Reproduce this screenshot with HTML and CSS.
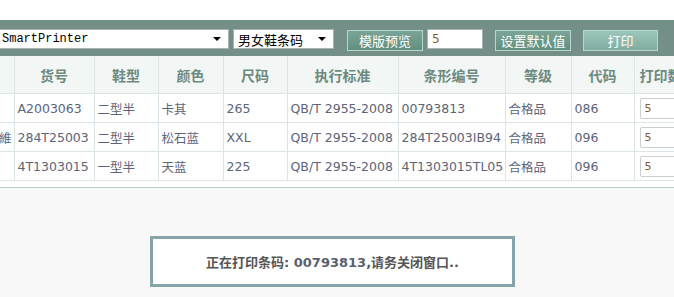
FILE: index.html
```html
<!DOCTYPE html>
<html lang="zh-CN">
<head>
    <meta charset="UTF-8">
    <title>打印条码</title>
    <link rel="stylesheet" href="styles.css">
</head>
<body>
    <div class="top"></div>
    <div class="toolbar">
        <div class="sel sel-printer"><select><option>SmartPrinter</option></select></div>
        <div class="sel sel-tpl"><select><option>男女鞋条码</option></select></div>
        <button class="btn btn-preview">模版预览</button>
        <input class="num" type="text" value="5">
        <button class="btn btn-default">设置默认值</button>
        <button class="btn btn-print">打印</button>
    </div>
    <div class="grid-wrap">
        <table class="grid">
            <colgroup>
                <col style="width:60px">
                <col style="width:80px">
                <col style="width:64px">
                <col style="width:65px">
                <col style="width:64px">
                <col style="width:111px">
                <col style="width:107px">
                <col style="width:66px">
                <col style="width:63px">
                <col style="width:80px">
            </colgroup>
            <thead>
                <tr>
                    <th>名称</th>
                    <th>货号</th>
                    <th>鞋型</th>
                    <th>颜色</th>
                    <th>尺码</th>
                    <th>执行标准</th>
                    <th>条形编号</th>
                    <th>等级</th>
                    <th>代码</th>
                    <th class="left">打印数量</th>
                </tr>
            </thead>
            <tbody>
                <tr>
                    <td></td>
                    <td>A2003063</td>
                    <td>二型半</td>
                    <td>卡其</td>
                    <td>265</td>
                    <td>QB/T 2955-2008</td>
                    <td>00793813</td>
                    <td>合格品</td>
                    <td>086</td>
                    <td><input class="qty" type="text" value="5"></td>
                </tr>
                <tr>
                    <td class="clip">合成纖維</td>
                    <td>284T25003</td>
                    <td>二型半</td>
                    <td>松石蓝</td>
                    <td>XXL</td>
                    <td>QB/T 2955-2008</td>
                    <td>284T25003IB94</td>
                    <td>合格品</td>
                    <td>096</td>
                    <td><input class="qty" type="text" value="5"></td>
                </tr>
                <tr>
                    <td></td>
                    <td>4T1303015</td>
                    <td>一型半</td>
                    <td>天蓝</td>
                    <td>225</td>
                    <td>QB/T 2955-2008</td>
                    <td>4T1303015TL05</td>
                    <td>合格品</td>
                    <td>096</td>
                    <td><input class="qty" type="text" value="5"></td>
                </tr>
            </tbody>
        </table>
    </div>
    <div class="status-area">
        <div class="status"><span>正在打印条码: <span class="code">00793813</span>,请务关闭窗口..</span></div>
    </div>
</body>
</html>
```

FILE: styles.css
```css
html, body {
    margin: 0;
    padding: 0;
    height: 100%;
    overflow: hidden;
}
body {
    font-family: "DejaVu Sans", "Noto Sans CJK SC", sans-serif;
    background: #f8f8f8;
    font-size: 13px;
}
.top {
    height: 20px;
    background: #fff;
}
.toolbar {
    height: 36px;
    box-sizing: border-box;
    padding-top: 9px;
    background: #738f88;
    display: flex;
    align-items: flex-start;
    margin-left: -2px;
}
.sel {
    position: relative;
    height: 20px;
    background: #fff;
    border: 1px solid #a9b3b0;
    box-sizing: border-box;
}
.sel select {
    appearance: none;
    -webkit-appearance: none;
    border: none;
    background: transparent;
    height: 18px;
    width: 100%;
    padding: 0 0 0 3px;
    color: #000;
    outline: none;
}
.sel::after {
    content: "";
    position: absolute;
    right: 7px;
    top: 7px;
    border-left: 4px solid transparent;
    border-right: 4px solid transparent;
    border-top: 4px solid #000;
}
.sel-printer {
    width: 231px;
}
.sel-printer select {
    font-family: "Liberation Mono", "Noto Sans CJK SC", monospace;
    font-size: 12px;
}
.sel-tpl {
    width: 101px;
    margin-left: 4px;
}
.sel-tpl select {
    font-family: "Noto Sans CJK SC", sans-serif;
    font-size: 13px;
    padding-left: 4px;
}
.btn {
    height: 21px;
    width: 76px;
    margin-top: 1px;
    padding: 0;
    border: 1px solid #b4d8cd;
    background: linear-gradient(#7aa497, #62907f);
    color: #fff;
    font-family: "Noto Sans CJK SC", sans-serif;
    font-size: 13px;
    line-height: 19px;
}
.btn-preview {
    margin-left: 13px;
}
.btn-default {
    margin-left: 12px;
}
.btn-print {
    margin-left: 12px;
    width: 75px;
    background: linear-gradient(#9cc6ba, #80ad9f);
}
.num {
    width: 56px;
    height: 20px;
    margin-left: 4px;
    box-sizing: border-box;
    border: 1px solid #a9b3b0;
    padding: 0 4px;
    font-family: "DejaVu Sans", sans-serif;
    font-size: 12px;
    color: #8a5a2a;
}
.grid-wrap {
    background: #fff;
    overflow: hidden;
    padding-bottom: 6px;
    border-bottom: 1px solid #bccfca;
}
.grid {
    table-layout: fixed;
    border-collapse: collapse;
    margin-left: -46px;
    width: 760px;
}
.grid th {
    height: 37px;
    background: #f2f6f5;
    color: #6d8a81;
    font-family: "Noto Sans CJK SC", sans-serif;
    font-size: 14px;
    font-weight: bold;
    border-right: 1px solid #dbe5e2;
    border-bottom: 1px solid #dbe5e2;
    padding: 0;
    white-space: nowrap;
    overflow: hidden;
}
.grid th.left {
    text-align: left;
    padding-left: 5px;
}
.grid td {
    height: 27px;
    padding: 1px 0 0 3px;
    color: #5c6479;
    border-right: 1px solid #dbe5e2;
    border-bottom: 1px solid #dbe5e2;
    white-space: nowrap;
    overflow: hidden;
    font-size: 12.5px;
}
.grid td.clip {
    text-align: right;
    padding-right: 2px;
}
.qty {
    width: 70px;
    height: 21px;
    box-sizing: border-box;
    border: 1px solid #c9cfcd;
    border-radius: 2px;
    margin-left: 2px;
    padding: 0 4px;
    font-family: "DejaVu Sans", sans-serif;
    font-size: 11px;
    color: #8a5a2a;
}
.status-area {
    padding-top: 48px;
    padding-left: 150px;
}
.status {
    width: 359px;
    height: 45px;
    border: 3px solid #87a4a9;
    background: #fff;
    display: flex;
    align-items: center;
    justify-content: center;
    font-family: "DejaVu Sans", "Noto Sans CJK SC", sans-serif;
    font-size: 13px;
    font-weight: bold;
    color: #555;
}
.code {
    color: #5a5f6e;
}
```
